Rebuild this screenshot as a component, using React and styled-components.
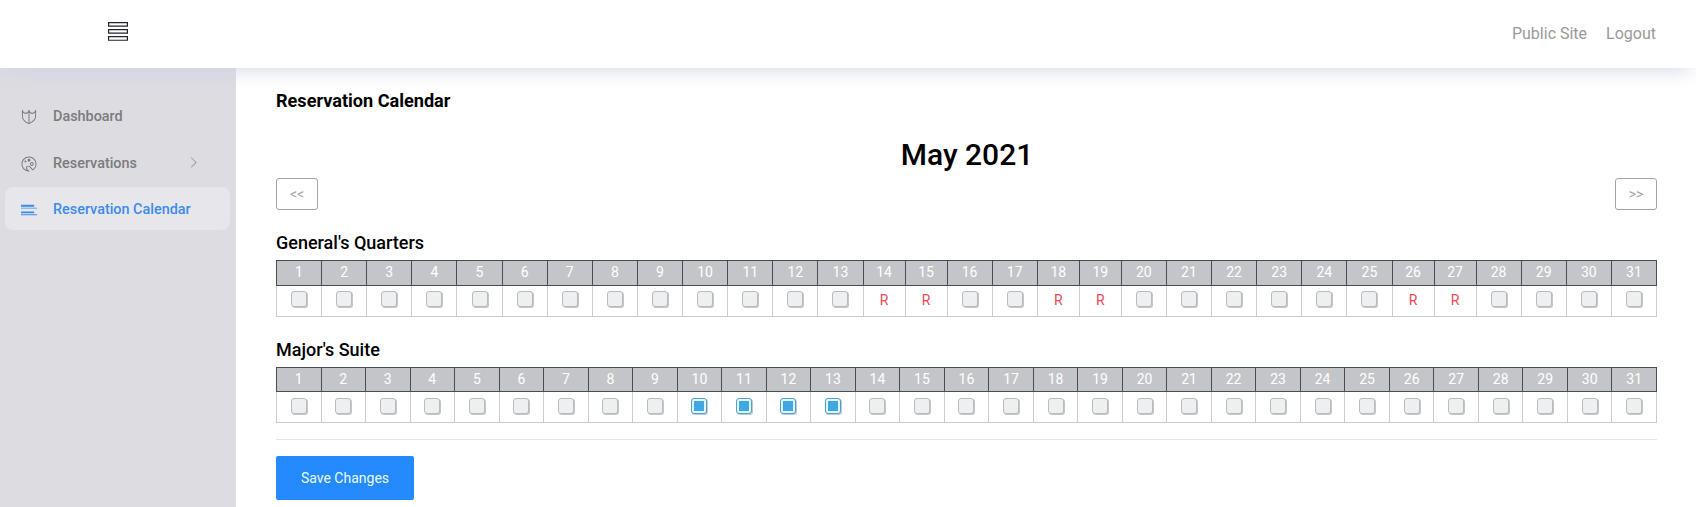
import React from "react";
import styled, { createGlobalStyle } from "styled-components";
import {
  TfiViewList,
  TfiShield,
  TfiPalette,
  TfiLayoutListPost,
  TfiAngleRight,
} from "react-icons/tfi";

const GlobalStyle = createGlobalStyle`
  *, *::before, *::after { box-sizing: border-box; }
  body {
    margin: 0;
    background: #fff;
    color: #000;
    font-family: Roboto, sans-serif;
    overflow: hidden;
  }
`;

const Page = styled.div`
  display: flex;
  flex-direction: column;
  height: 507px;
`;

const Navbar = styled.header`
  position: relative;
  z-index: 1;
  flex: none;
  height: 68px;
  padding: 0 40px 0 108px;
  display: flex;
  align-items: center;
  justify-content: space-between;
  background: #fff;
  box-shadow: 0 5px 21px -5px #cdd1e1;
`;

const MenuToggle = styled.button`
  display: flex;
  padding: 0;
  margin-top: -5px;
  border: 0;
  background: none;
  color: #27202e;
  font-size: 20px;
`;

const NavLinks = styled.nav`
  display: flex;
  gap: 19px;
`;

const NavLink = styled.a`
  font-size: 16px;
  line-height: 20px;
  color: #999;
`;

const Body = styled.div`
  flex: 1;
  display: flex;
  min-height: 0;
`;

const Sidebar = styled.aside`
  flex: none;
  width: 236px;
  padding: 26px 6px 0 5px;
  display: flex;
  flex-direction: column;
  gap: 3px;
  background: #dcdce1;
`;

const SidebarItem = styled.a`
  display: flex;
  align-items: center;
  height: ${(p) => (p.$active ? 43 : 44)}px;
  margin-top: ${(p) => (p.$active ? -1 : 0)}px;
  padding: 0 31px 0 16px;
  border-radius: 8px;
  background: ${(p) => (p.$active ? "#e7e7eb" : "transparent")};
  color: ${(p) => (p.$active ? "#3b8beb" : "#7b7b7d")};
  font-size: 14.4px;
  font-weight: 500;
  line-height: 16px;

  svg {
    flex: none;
    font-size: 16px;
    margin-top: ${(p) => (p.$active ? 3 : 2)}px;
  }
`;

const ItemTitle = styled.span`
  flex: 1;
  margin-left: 16px;
  padding-top: 2px;
  white-space: nowrap;
`;

const Chevron = styled(TfiAngleRight)`
  && {
    font-size: 11px;
    margin-top: -2px;
  }
`;

const Content = styled.main`
  flex: 1;
  min-width: 0;
  padding: 22px 39px 0 40px;
`;

const PageTitle = styled.h4`
  margin: 0;
  font-size: 18.1px;
  font-weight: 700;
  line-height: 22px;
`;

const MonthTitle = styled.h3`
  margin: 24px 0 5px;
  padding-left: 1px;
  text-align: center;
  font-size: 30px;
  font-weight: 500;
  line-height: 37px;
`;

const MonthNav = styled.div`
  display: flex;
  justify-content: space-between;
`;

const OutlineButton = styled.button`
  width: 42px;
  height: 32px;
  padding: 0;
  border: 1px solid #a3a4a5;
  border-radius: 3px;
  background: transparent;
  color: #a3a4a5;
  font: 400 14px/14px Roboto, sans-serif;
`;

const RoomTitle = styled.h4`
  margin: 22px 0 6px;
  font-size: 18px;
  font-weight: 500;
  line-height: 22px;
`;

const Calendar = styled.div`
  width: 1381px;
`;

const CalendarRow = styled.div`
  display: grid;
  grid-template-columns: ${(p) => p.$columns};
  height: ${(p) => p.$height}px;
`;

const HeadRow = styled(CalendarRow)`
  border: 1px solid #454d55;
  border-left: 0;
`;

const DayRow = styled(CalendarRow)`
  border: 1px solid #c9ccd0;
  border-width: 0 1px 1px 0;
`;

const HeadCell = styled.div`
  padding-top: 3px;
  border-left: 1px solid #454d55;
  background: #c3c5c9;
  color: #fff;
  text-align: center;
  font-size: 14px;
  line-height: 16px;
`;

const DayCell = styled.div`
  display: flex;
  align-items: flex-start;
  justify-content: center;
  padding-top: ${(p) => p.$offset}px;
  border-left: 1px solid #c9ccd0;
`;

const Reserved = styled.span`
  padding-top: 1px;
  color: #e64a57;
  font-size: 14px;
  line-height: 16px;
`;

const Checkbox = styled.input`
  appearance: none;
  display: grid;
  place-items: center;
  width: 16px;
  height: 16px;
  margin: 0;
  border: 1px solid ${(p) => (p.defaultChecked ? "#539fc8" : "#b9bbbd")};
  border-radius: 3px;
  background: ${(p) => (p.defaultChecked ? "#e0f8fd" : "#eeeff1")};
  box-shadow: 1px 1px 0 ${(p) => (p.defaultChecked ? "#bdcbd2" : "#c5c6c7")};

  &:checked::before {
    content: "";
    width: 10px;
    height: 10px;
    background: #3ea7e4;
  }
`;

const Divider = styled.hr`
  height: 1px;
  margin: 16px 0;
  border: 0;
  background: #e5e5e6;
`;

const SaveButton = styled.button`
  display: block;
  width: 138px;
  height: 44px;
  padding: 0;
  border: 0;
  border-radius: 2px;
  background: #248afd;
  color: #e9fbff;
  font: 400 14px/14px Roboto, sans-serif;
`;

const DAYS = Array.from({ length: 31 }, (_, i) => i + 1);

function RoomCalendar({ name, headHeight, boxOffset, reserved = [], blocked = [] }) {
  const columns = DAYS.map((d) =>
    reserved.includes(d) ? "42fr" : "45.12fr"
  ).join(" ");
  return (
    <section>
      <RoomTitle>{name}</RoomTitle>
      <Calendar>
        <HeadRow $columns={columns} $height={headHeight}>
          {DAYS.map((d) => (
            <HeadCell key={d}>{d}</HeadCell>
          ))}
        </HeadRow>
        <DayRow $columns={columns} $height={31}>
          {DAYS.map((d) => (
            <DayCell key={d} $offset={boxOffset}>
              {reserved.includes(d) ? (
                <Reserved>R</Reserved>
              ) : (
                <Checkbox type="checkbox" defaultChecked={blocked.includes(d)} />
              )}
            </DayCell>
          ))}
        </DayRow>
      </Calendar>
    </section>
  );
}

export default function App() {
  return (
    <Page>
      <GlobalStyle />
      <Navbar>
        <MenuToggle aria-label="Toggle menu">
          <TfiViewList />
        </MenuToggle>
        <NavLinks>
          <NavLink>Public Site</NavLink>
          <NavLink>Logout</NavLink>
        </NavLinks>
      </Navbar>
      <Body>
        <Sidebar>
          <SidebarItem>
            <TfiShield />
            <ItemTitle>Dashboard</ItemTitle>
          </SidebarItem>
          <SidebarItem>
            <TfiPalette />
            <ItemTitle>Reservations</ItemTitle>
            <Chevron />
          </SidebarItem>
          <SidebarItem $active>
            <TfiLayoutListPost />
            <ItemTitle>Reservation Calendar</ItemTitle>
          </SidebarItem>
        </Sidebar>
        <Content>
          <PageTitle>Reservation Calendar</PageTitle>
          <MonthTitle>May 2021</MonthTitle>
          <MonthNav>
            <OutlineButton>&lt;&lt;</OutlineButton>
            <OutlineButton>&gt;&gt;</OutlineButton>
          </MonthNav>
          <RoomCalendar
            name="General's Quarters"
            headHeight={26}
            boxOffset={5}
            reserved={[14, 15, 18, 19, 26, 27]}
          />
          <RoomCalendar
            name="Major's Suite"
            headHeight={25}
            boxOffset={6}
            blocked={[10, 11, 12, 13]}
          />
          <Divider />
          <SaveButton>Save Changes</SaveButton>
        </Content>
      </Body>
    </Page>
  );
}
